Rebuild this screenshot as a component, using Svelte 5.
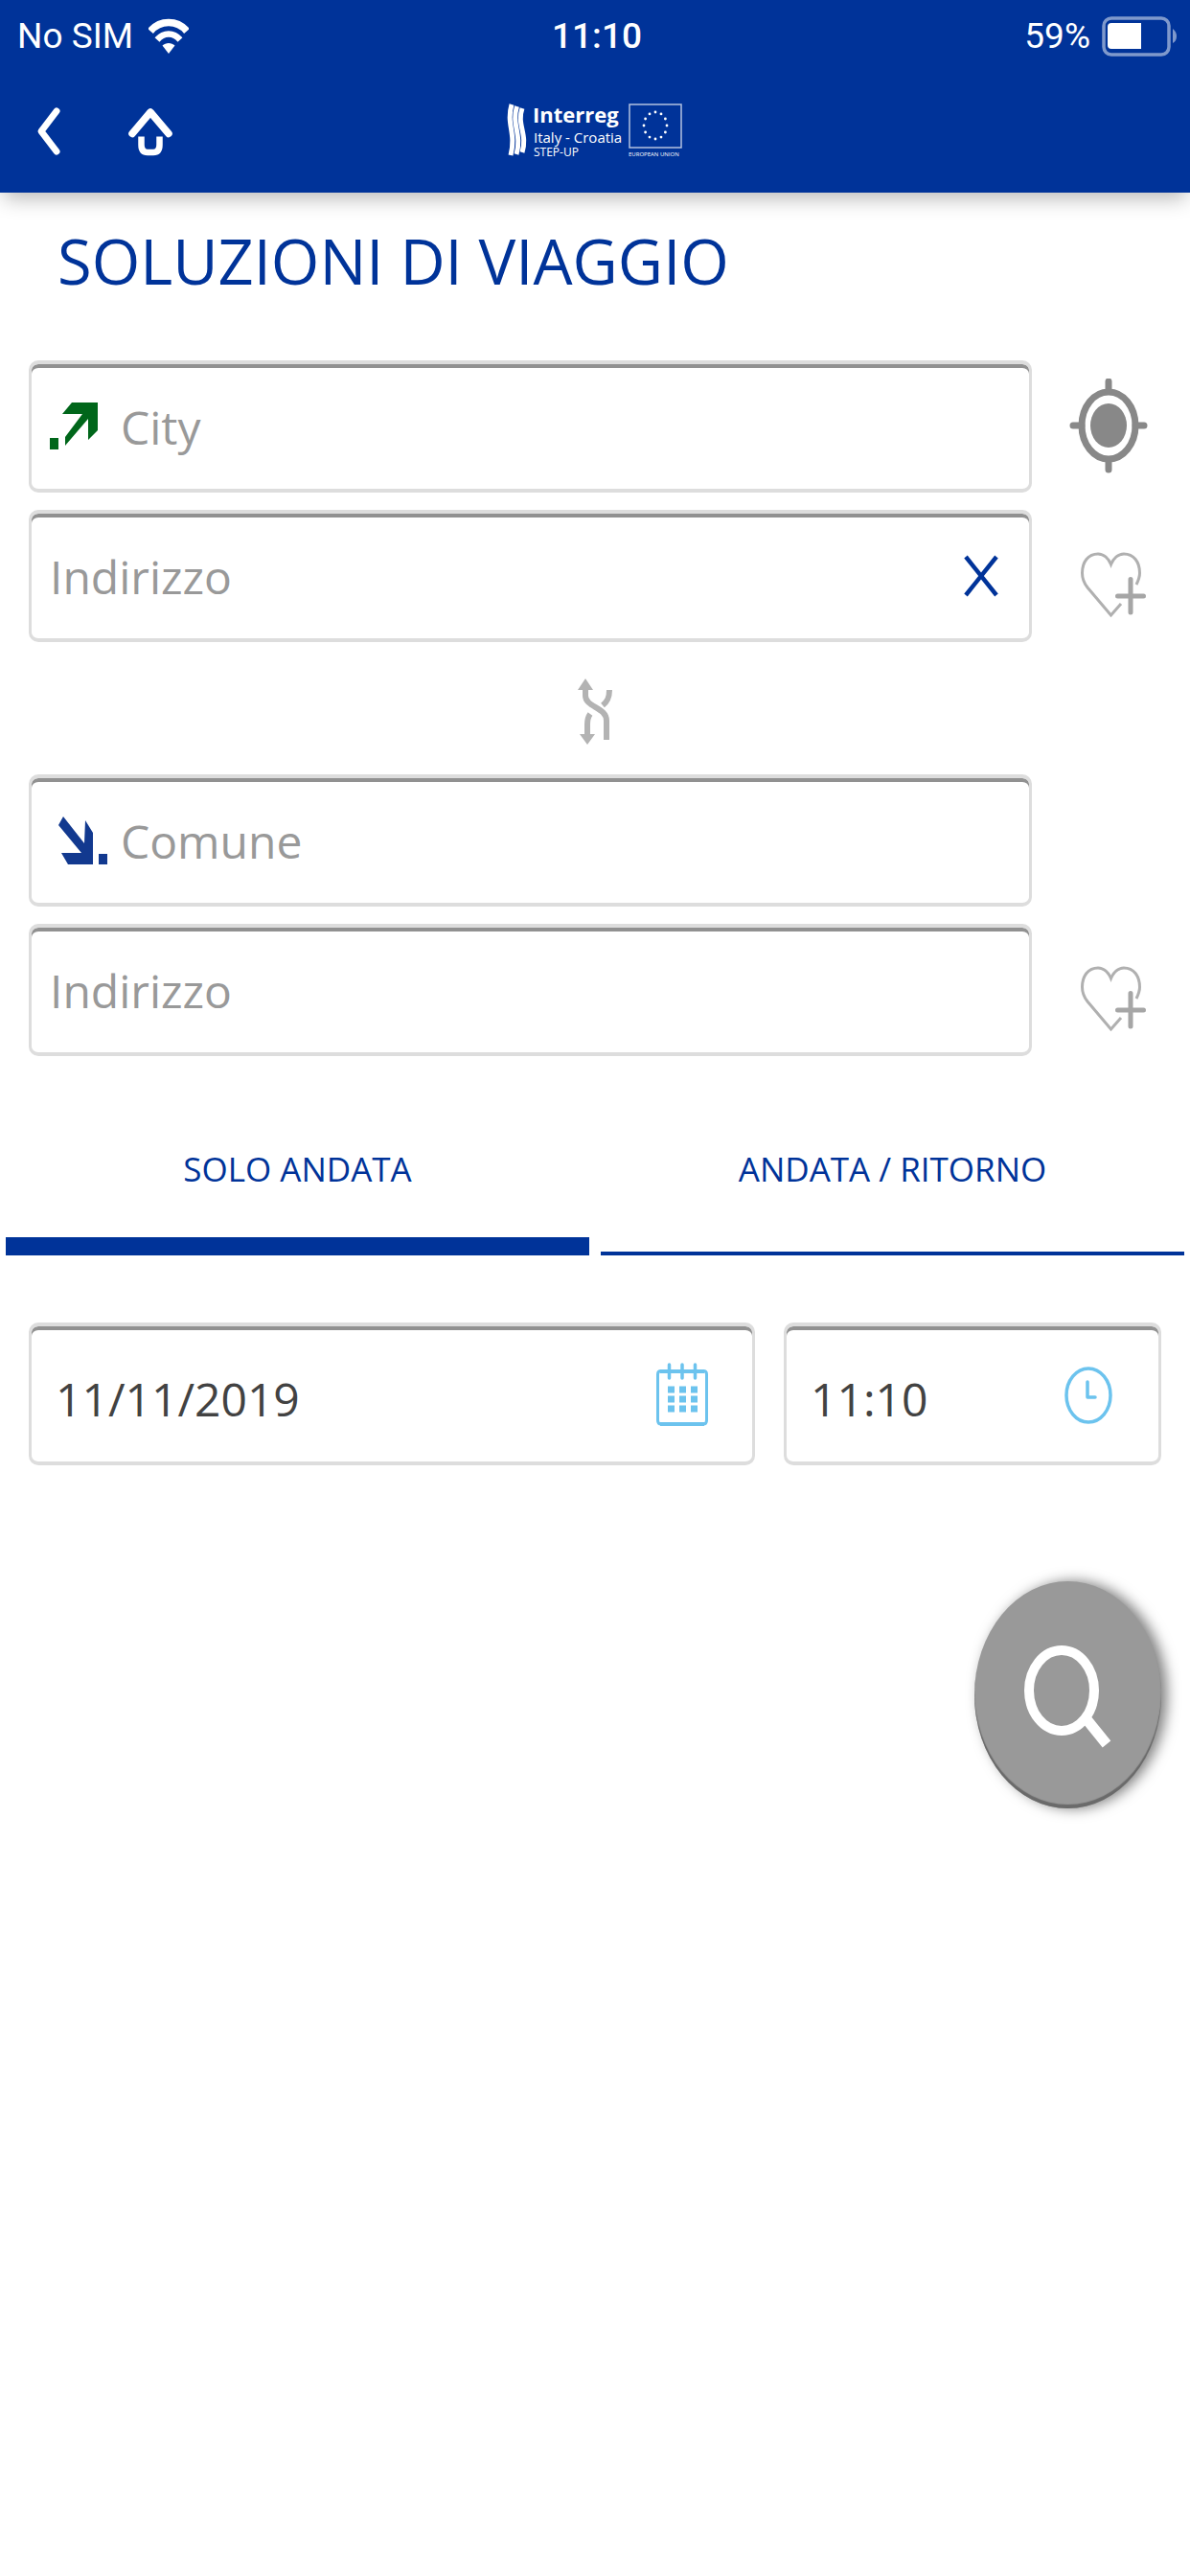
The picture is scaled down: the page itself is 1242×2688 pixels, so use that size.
<script lang="ts">
  type Trip = 'oneway' | 'return'

  let fromCity = $state('')
  let fromAddress = $state('')
  let toCity = $state('')
  let toAddress = $state('')
  let date = $state('11/11/2019')
  let time = $state('11:10')
  let trip = $state<Trip>('oneway')

  const tabs: { id: Trip; label: string }[] = [
    { id: 'oneway', label: 'SOLO ANDATA' },
    { id: 'return', label: 'ANDATA / RITORNO' },
  ]

  // twelve stars on the flag, clock positions
  const stars = Array.from({ length: 12 }, (_, i) => {
    const a = (i * Math.PI) / 6
    return { x: 155 + 12 * Math.sin(a), y: 23 - 14 * Math.cos(a) }
  })

  function swap() {
    ;[fromCity, toCity] = [toCity, fromCity]
    ;[fromAddress, toAddress] = [toAddress, fromAddress]
  }
</script>

{#snippet heart()}
  <svg width="84" height="100" viewBox="0 0 84 100" fill="none" stroke="#b0b0b0">
    <path
      d="M55 79 L44.5 91 L20 62 C16 57 14.500 52 14.500 47 C14.500 35 21 27 31 27 C37 27 42 32 44.500 38 C47 32 52 27 58 27 C68 27 74.500 35 74.500 47 C74.500 51 73 55 71 59"
      stroke-width="3"
    />
    <path d="M51.500 71 H78.500 M65 53.500 V88" stroke="#a6a6a6" stroke-width="5" stroke-linecap="round" />
  </svg>
{/snippet}

<header class="top">
  <div class="status">
    <div class="carrier">
      <span>No SIM</span>
      <svg width="42" height="38" viewBox="0 0 42 38" fill="none" stroke="#fff">
        <path d="M2 13.500 C12 1.500 30 1.500 40 13.500" stroke-width="7.500" />
        <path d="M9 22.500 C16 14.500 26 14.500 33 22.500" stroke-width="6.500" />
        <path d="M21 37 L14.500 28.500 C18 25 24 25 27.500 28.500 Z" fill="#fff" stroke="none" />
      </svg>
    </div>
    <span class="clock">11:10</span>
    <div class="battery">
      <span>59%</span>
      <svg width="80" height="42" viewBox="0 0 80 42">
        <rect x="4" y="2" width="68" height="38" rx="8" fill="none" stroke="#7f99cc" stroke-width="3.500" />
        <path d="M12 7 H43 V34 H12 Q8 34 8 30 V11 Q8 7 12 7 Z" fill="#fff" />
        <path d="M76 13 Q80 16 80 21 Q80 26 76 28 Z" fill="#7f99cc" />
      </svg>
    </div>
  </div>

  <nav class="bar">
    <div class="nav-buttons">
      <button class="plain" aria-label="Indietro">
        <svg width="28" height="54" viewBox="0 0 28 54" fill="none" stroke="#fff" stroke-width="7" stroke-linecap="round" stroke-linejoin="round">
          <path d="M23 6 L7 27 L23 48" />
        </svg>
      </button>
      <button class="plain" aria-label="Home">
        <svg width="48" height="54" viewBox="0 0 48 54" fill="none" stroke="#fff">
          <path d="M5 29.500 L24 7 L43 29.500" stroke-width="7.500" stroke-linecap="round" stroke-linejoin="round" />
          <path d="M14.500 32.500 V41 Q14.500 49 21 49 H27 Q33.500 49 33.500 41 V32.500" stroke-width="6.500" />
        </svg>
      </button>
    </div>
    <svg class="logo" width="184" height="58" viewBox="0 0 184 58" role="img" aria-label="Interreg Italy - Croatia STEP-UP">
      <g fill="none" stroke="#fff" stroke-width="5">
        <path d="M5 1 C-1 22 10 30 4 54" />
        <path d="M10.500 3 C4.500 22 16 32 10 53" />
        <path d="M16 5 C10 22 22 32 16 51" />
      </g>
      <g fill="#fff">
        <text class="brand" x="27" y="20">Interreg</text>
        <text class="area" x="28" y="41">Italy - Croatia</text>
        <text class="project" x="28" y="55">STEP-UP</text>
        <text class="union" x="127" y="55">EUROPEAN UNION</text>
      </g>
      <rect x="128" y="1" width="54" height="45" fill="none" stroke="#b3c2e0" stroke-width="1.500" />
      {#each stars as star}
        <circle cx={star.x} cy={star.y} r="1.400" fill="#fff" />
      {/each}
    </svg>
  </nav>
</header>

<main>
  <h1>SOLUZIONI DI VIAGGIO</h1>

  <div class="places">
    <div class="row">
      <div class="field">
        <svg width="60" height="50" viewBox="0 0 60 50" fill="#00661a">
          <path d="M23 0 H50 V29 L40 39 V17 L16 45 V36 L34 12 H13 Z" />
          <rect x="0" y="37" width="9" height="12" />
        </svg>
        <input type="text" placeholder="City" aria-label="City" bind:value={fromCity} />
      </div>
      <button class="side" aria-label="Posizione attuale">
        <svg width="84" height="100" viewBox="0 0 84 100">
          <ellipse cx="42" cy="49" rx="28" ry="35" fill="none" stroke="#888" stroke-width="7" />
          <ellipse cx="42" cy="49" rx="19" ry="23" fill="#888" />
          <path d="M42 3 V13 M42 85 V95 M5 49 H14 M70 49 H79" stroke="#888" stroke-width="7" stroke-linecap="round" />
        </svg>
      </button>
    </div>

    <div class="row">
      <div class="field">
        <input type="text" placeholder="Indirizzo" aria-label="Indirizzo di partenza" bind:value={fromAddress} />
        <button class="plain" aria-label="Cancella" onclick={() => (fromAddress = '')}>
          <svg width="36" height="44" viewBox="0 0 36 44" stroke="#039" stroke-width="4.500">
            <path d="M2 2 L34 42 M34 2 L2 42" />
          </svg>
        </button>
      </div>
      <button class="side" aria-label="Aggiungi partenza ai preferiti">{@render heart()}</button>
    </div>
  </div>

  <button class="plain swap" aria-label="Inverti" onclick={swap}>
    <svg width="40" height="76" viewBox="0 0 40 76" fill="none" stroke="#b3b3b3" stroke-width="6">
      <path d="M10 16 V25 C10 37 32 37 32 51 V71" />
      <path d="M35 19 C35 27 33 31 28 35" />
      <path d="M15 44 C12 48 12 51 12 55 V67" />
      <path d="M10 7 L18 19 H2 Z M12 76 L4 65 H20 Z" fill="#b3b3b3" stroke="none" />
    </svg>
  </button>

  <div class="places">
    <div class="row">
      <div class="field">
        <svg width="60" height="50" viewBox="0 0 60 50" fill="#12398f">
          <path d="M14 0 L9 9 L33 38 H12 L19 50 H45 V17 L37 4 L36 28 Z" />
          <rect x="51" y="39" width="9" height="11" />
        </svg>
        <input type="text" placeholder="Comune" aria-label="Comune" bind:value={toCity} />
      </div>
      <div class="side"></div>
    </div>

    <div class="row">
      <div class="field">
        <input type="text" placeholder="Indirizzo" aria-label="Indirizzo di arrivo" bind:value={toAddress} />
      </div>
      <button class="side" aria-label="Aggiungi arrivo ai preferiti">{@render heart()}</button>
    </div>
  </div>

  <div class="tabs" role="tablist">
    {#each tabs as tab}
      <button
        role="tab"
        class="tab"
        class:active={trip === tab.id}
        aria-selected={trip === tab.id}
        onclick={() => (trip = tab.id)}
      >
        {tab.label}
      </button>
    {/each}
  </div>

  <div class="when">
    <div class="field tall">
      <input type="text" aria-label="Data" bind:value={date} />
      <svg width="54" height="68" viewBox="0 0 54 68" fill="none" stroke="#6cc3ee">
        <path d="M1.500 13 Q1.500 9.500 5 9.500 H49 Q52.500 9.500 52.500 13 V61 Q52.500 65 49 65 H5 Q1.500 65 1.500 61 Z" stroke-width="3" />
        <path d="M4 10 H50 M4 65 H50" stroke-width="4" />
        <path d="M13.500 3 V17 M27 3 V17 M40.500 3 V17" stroke-width="3.500" stroke-linecap="round" />
        <path d="M12 29 H43 M12 39 H43 M12 49 H43" stroke-width="7" stroke-dasharray="7 5" />
      </svg>
    </div>
    <div class="field tall">
      <input type="text" aria-label="Ora" bind:value={time} />
      <svg width="54" height="68" viewBox="0 0 54 68" fill="none" stroke="#6cc3ee">
        <ellipse cx="27" cy="35" rx="23" ry="28" stroke-width="3.500" />
        <path d="M26 21 V37 H34" stroke-width="3.500" stroke-linecap="round" stroke-linejoin="round" />
      </svg>
    </div>
  </div>

  <button class="search" aria-label="Cerca">
    <svg width="92" height="110" viewBox="0 0 92 110" fill="none" stroke="#fff">
      <ellipse cx="39" cy="50" rx="34" ry="42" stroke-width="10" />
      <path d="M65 80 L86 106" stroke-width="11" />
    </svg>
  </button>
</main>

<style>
  :global(body) {
    background: #fff;
    font-family: 'Open Sans', 'Noto Sans', sans-serif;
  }

  svg {
    display: block;
    flex: none;
  }

  button {
    padding: 0;
    border: 0;
    background: none;
    font: inherit;
    cursor: pointer;
  }

  .top {
    color: #fff;
    background: #039;
    box-shadow: 0 10px 20px -4px rgba(0, 0, 0, 0.28);
  }

  .status {
    display: grid;
    grid-template-columns: 1fr auto 1fr;
    align-items: center;
    height: 76px;
    padding: 0 14px 0 18px;
    font-family: Roboto, sans-serif;
    font-size: 37px;
    line-height: 44px;
  }

  .carrier,
  .battery {
    display: flex;
    align-items: center;
    gap: 16px;
  }

  .battery {
    justify-content: flex-end;
    gap: 10px;
  }

  .clock {
    font-weight: 500;
  }

  .bar {
    display: grid;
    grid-template-columns: 1fr auto 1fr;
    align-items: center;
    height: 125px;
    padding: 0 36px 4px;
    box-sizing: border-box;
  }

  .nav-buttons {
    display: flex;
    gap: 69px;
  }

  .logo {
    overflow: visible;
  }

  .brand {
    font: 700 22px 'Open Sans', sans-serif;
  }

  .area {
    font: 500 15px 'Open Sans', sans-serif;
  }

  .project {
    font: 500 12px 'Open Sans', sans-serif;
  }

  .union {
    font: 400 6px 'Open Sans', sans-serif;
  }

  main {
    display: flex;
    flex-direction: column;
    padding: 26px 30px 60px;
  }

  h1 {
    margin: 0 0 59px;
    padding-left: 30px;
    color: #039;
    font-size: 65px;
    font-weight: 400;
    line-height: 90px;
  }

  .places {
    display: grid;
    gap: 18px;
  }

  .row {
    display: flex;
    gap: 24px;
  }

  .field {
    display: flex;
    flex: 1;
    align-items: center;
    gap: 14px;
    min-width: 0;
    height: 138px;
    padding: 0 32px 0 19px;
    box-sizing: border-box;
    border: 3px solid #ddd;
    border-width: 4px 3px;
    border-radius: 10px;
    box-shadow: inset 0 4px 0 #919191;
  }

  .field input {
    flex: 1;
    min-width: 0;
    height: 80px;
    padding: 0;
    border: 0;
    outline: 0;
    background: none;
    color: #424242;
    font: inherit;
    font-size: 48px;
  }

  .field input::placeholder {
    color: #999;
    opacity: 1;
  }

  .field.tall {
    height: 149px;
    padding: 0 46px 0 25px;
  }

  .field.tall input {
    padding-top: 10px;
  }

  .side {
    display: flex;
    flex: 0 0 111px;
    align-items: center;
    justify-content: center;
  }

  .swap {
    display: flex;
    align-items: center;
    justify-content: center;
    align-self: center;
    height: 138px;
  }

  .tabs {
    display: grid;
    grid-template-columns: 1fr 1fr;
    gap: 12px;
    margin: 48px -24px 70px;
  }

  .tab {
    padding: 40px 0 56px;
    border-bottom: 4px solid #039;
    color: #039;
    font-size: 35px;
    line-height: 60px;
  }

  .tab.active {
    padding-bottom: 41px;
    border-bottom-width: 19px;
  }

  .when {
    display: grid;
    grid-template-columns: 758fr 394fr;
    gap: 30px;
  }

  .search {
    display: flex;
    align-items: center;
    justify-content: center;
    align-self: flex-end;
    width: 195px;
    height: 237px;
    margin-top: 121px;
    border-radius: 50%;
    background: #999;
    box-shadow:
      inset 0 -4px 1px #6a6a6a,
      6px 0 14px rgba(0, 0, 0, 0.5);
  }
</style>
